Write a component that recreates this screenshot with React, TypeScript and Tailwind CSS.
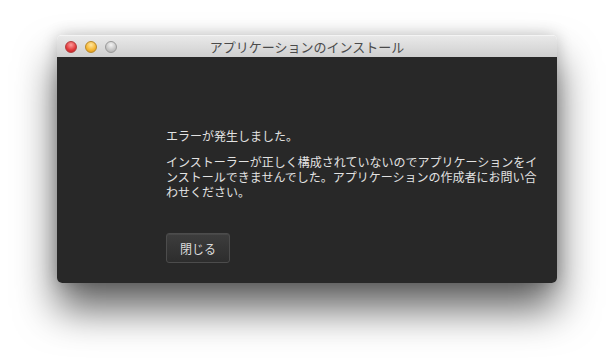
export default function App() {
  const font = { fontFamily: '"Noto Sans CJK JP", "Noto Sans", sans-serif' };
  return (
    <div className="flex h-[361px] w-[614px] items-start bg-white pl-[57px] pt-[35px]" style={font}>
      <div className="flex w-[500px] flex-col overflow-hidden rounded-[5px] shadow-[0_26px_40px_rgba(0,0,0,0.62),0_0_16px_rgba(0,0,0,0.2)]">
        <div className="relative flex h-[22px] items-center border-t border-[#f4f4f4] bg-gradient-to-b from-[#e9e9e9] to-[#cfcfcf] px-[8px]">
          <div className="flex gap-[8px]">
            <span className="h-[12px] w-[12px] rounded-full border border-[#b23c3c] bg-[radial-gradient(circle_at_50%_30%,#ff9b9b,#e0383a_60%,#b71d1f)]" />
            <span className="h-[12px] w-[12px] rounded-full border border-[#b8892a] bg-[radial-gradient(circle_at_50%_30%,#ffe7a0,#f5b532_60%,#d18c12)]" />
            <span className="h-[12px] w-[12px] rounded-full border border-[#9a9a9a] bg-[radial-gradient(circle_at_50%_30%,#f3f3f3,#c4c4c4_60%,#a8a8a8)]" />
          </div>
          <div className="absolute inset-0 flex items-center justify-center text-[13px] text-[#4a4a4a]">
            アプリケーションのインストール
          </div>
        </div>
        <div className="flex h-[226px] flex-col bg-[#282828] pl-[109px] pr-[16px] pt-[71px] text-[12px] leading-[15px] text-[#e2e2e2]">
          <p>エラーが発生しました。</p>
          <p className="mt-[11px] w-[375px]">
            インストーラーが正しく構成されていないのでアプリケーションをインストールできませんでした。アプリケーションの作成者にお問い合わせください。
          </p>
          <div className="mt-[34px]">
            <button className="h-[30px] w-[64px] rounded-[3px] border border-[#4c4c4c] bg-gradient-to-b from-[#3d3d3d] to-[#2d2d2d] text-[12px] text-[#dcdcdc] shadow-[inset_0_1px_0_rgba(255,255,255,0.06)]">
              閉じる
            </button>
          </div>
        </div>
      </div>
    </div>
  );
}
